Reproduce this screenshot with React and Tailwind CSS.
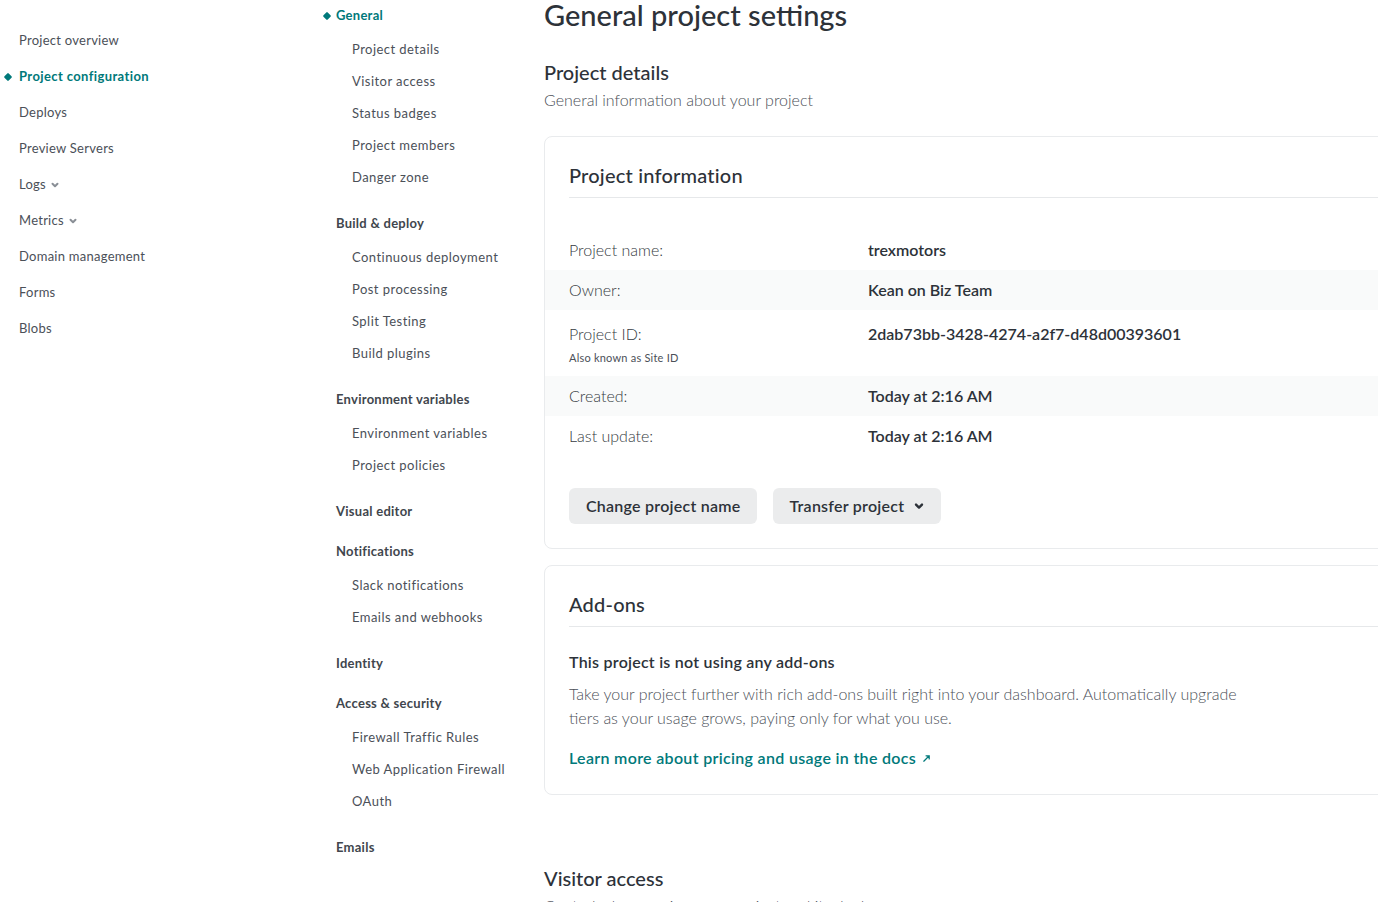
import React from 'react';

const mainNav = [
  { label: 'Project overview' },
  { label: 'Project configuration', active: true },
  { label: 'Deploys' },
  { label: 'Preview Servers' },
  { label: 'Logs', caret: true },
  { label: 'Metrics', caret: true },
  { label: 'Domain management' },
  { label: 'Forms' },
  { label: 'Blobs' },
];

const settingsNav = [
  { title: 'General', active: true, items: ['Project details', 'Visitor access', 'Status badges', 'Project members', 'Danger zone'] },
  { title: 'Build & deploy', items: ['Continuous deployment', 'Post processing', 'Split Testing', 'Build plugins'] },
  { title: 'Environment variables', items: ['Environment variables', 'Project policies'] },
  { title: 'Visual editor', items: [] },
  { title: 'Notifications', items: ['Slack notifications', 'Emails and webhooks'] },
  { title: 'Identity', items: [] },
  { title: 'Access & security', items: ['Firewall Traffic Rules', 'Web Application Firewall', 'OAuth'] },
  { title: 'Emails', items: [] },
];

const infoRows = [
  { label: 'Project name:', value: 'trexmotors' },
  { label: 'Owner:', value: 'Kean on Biz Team', striped: true },
  { label: 'Project ID:', value: '2dab73bb-3428-4274-a2f7-d48d00393601', note: 'Also known as Site ID' },
  { label: 'Created:', value: 'Today at 2:16 AM', striped: true },
  { label: 'Last update:', value: 'Today at 2:16 AM' },
];

function Caret({ className = '' }) {
  return (
    <svg viewBox="0 0 10 10" className={className} fill="none" stroke="currentColor" strokeWidth="2" strokeLinecap="round" strokeLinejoin="round">
      <path d="M2.5 3.8 5 6.3 7.5 3.8" />
    </svg>
  );
}

export default function App() {
  return (
    <div className="w-[1378px] h-[902px] overflow-hidden bg-white flex text-[#353a41]" style={{ fontFamily: 'Lato, "Noto Sans", sans-serif' }}>
      <nav className="w-[310px] shrink-0 pt-[23px] flex flex-col">
        {mainNav.map((item) => (
          <div key={item.label} className="relative h-[36px] flex items-center pl-[19px]">
            {item.active && <span className="absolute left-[5px] top-[15px] w-[6px] h-[6px] bg-[#00797a] rotate-45 rounded-[1px]" />}
            <span className={`text-[13px] tracking-[0.02em] ${item.active ? 'font-bold tracking-[0.03em] text-[#00797a]' : 'text-[#4b5058]'}`}>{item.label}</span>
            {item.caret && <Caret className="w-[10px] h-[10px] ml-[4px] text-[#8a8f96]" />}
          </div>
        ))}
      </nav>

      <nav className="w-[234px] shrink-0 pl-[26px] pt-[6px] flex flex-col">
        {settingsNav.map((group) => (
          <div key={group.title} className="mb-[8px]">
            <div className="relative h-[20px] flex items-center">
              {group.active && <span className="absolute left-[-12px] top-[7px] w-[6px] h-[6px] bg-[#00797a] rotate-45 rounded-[1px]" />}
              <span className={`text-[13px] font-bold tracking-[0.02em] ${group.active ? 'text-[#00797a]' : 'text-[#41464d]'}`}>{group.title}</span>
            </div>
            {group.items.length > 0 ? (
              <div className="pt-[8px] pb-[12px]">
                {group.items.map((it) => (
                  <div key={it} className="h-[32px] flex items-center pl-[16px] text-[13px] tracking-[0.035em] text-[#4b5058]">{it}</div>
                ))}
              </div>
            ) : (
              <div className="h-[12px]" />
            )}
          </div>
        ))}
      </nav>

      <main className="w-[900px] shrink-0">
        <h1 className="text-[29px] leading-[32px] font-medium text-[#2d3239] mt-[-1px]">General project settings</h1>

        <h2 className="mt-[27px] text-[20px] leading-[28px] font-medium text-[#2d3239]">Project details</h2>
        <p className="mt-[4px] text-[16px] leading-[20px] font-light text-[#4b5058]">General information about your project</p>

        <section className="mt-[26px] border border-[#e9ebed] rounded-[8px] pb-[24px]">
          <div className="mx-[24px] pt-[25px] pb-[9px] border-b border-[#e6e8ea]">
            <h3 className="text-[20px] leading-[26px] font-medium text-[#2d3239] tracking-[0.01em]">Project information</h3>
          </div>
          <div className="mt-[32px]">
            {infoRows.map((row) => (
              <div key={row.label} className={`flex px-[24px] ${row.striped ? 'bg-[#f9fafa]' : ''} ${row.note ? 'pt-[14px] pb-[10px]' : 'py-[10px]'}`}>
                <div className="w-[299px] shrink-0">
                  <div className="text-[16px] leading-[20px] font-light text-[#353a41]">{row.label}</div>
                  {row.note && <div className="mt-[6px] text-[11px] leading-[16px] text-[#4b5058] tracking-[0.02em]">{row.note}</div>}
                </div>
                <div className="text-[16px] leading-[20px] font-semibold text-[#2d3239]">{row.value}</div>
              </div>
            ))}
          </div>
          <div className="mt-[32px] px-[24px] flex gap-[16px]">
            <button type="button" className="h-[36px] px-[17px] rounded-[6px] bg-[#ebeced] text-[16px] font-semibold tracking-[0.015em] text-[#2d3239]">Change project name</button>
            <button type="button" className="h-[36px] px-[16px] rounded-[6px] bg-[#ebeced] text-[16px] font-semibold tracking-[0.015em] text-[#2d3239] flex items-center gap-[9px]">
              Transfer project
              <Caret className="w-[12px] h-[12px] text-[#2d3239]" />
            </button>
          </div>
        </section>

        <section className="mt-[16px] border border-[#e9ebed] rounded-[8px] pb-[24px]">
          <div className="mx-[24px] pt-[25px] pb-[9px] border-b border-[#e6e8ea]">
            <h3 className="text-[20px] leading-[26px] font-medium text-[#2d3239] tracking-[0.01em]">Add-ons</h3>
          </div>
          <div className="px-[24px] pt-[23px]">
            <h4 className="text-[16px] leading-[24px] font-semibold tracking-[0.015em] text-[#2d3239]">This project is not using any add-ons</h4>
            <p className="mt-[8px] w-[690px] text-[16px] leading-[24px] font-light text-[#4b5058]">
              Take your project further with rich add-ons built right into your dashboard. Automatically upgrade tiers as your usage grows, paying only for what you use.
            </p>
            <a href="#" className="mt-[16px] inline-flex items-center gap-[6px] text-[16px] leading-[24px] font-semibold tracking-[0.02em] text-[#00797a]">
              Learn more about pricing and usage in the docs
              <svg viewBox="0 0 10 10" className="w-[9px] h-[9px]" fill="none" stroke="currentColor" strokeWidth="1.4" strokeLinecap="round">
                <path d="M2 8 8 2M4.5 2H8v3.5" />
              </svg>
            </a>
          </div>
        </section>

        <h2 className="mt-[69px] text-[20px] leading-[28px] font-medium text-[#2d3239]">Visitor access</h2>
        <p className="mt-[4px] text-[16px] leading-[20px] font-light text-[#4b5058]">Control who can view your project and its deploys</p>
      </main>
    </div>
  );
}
